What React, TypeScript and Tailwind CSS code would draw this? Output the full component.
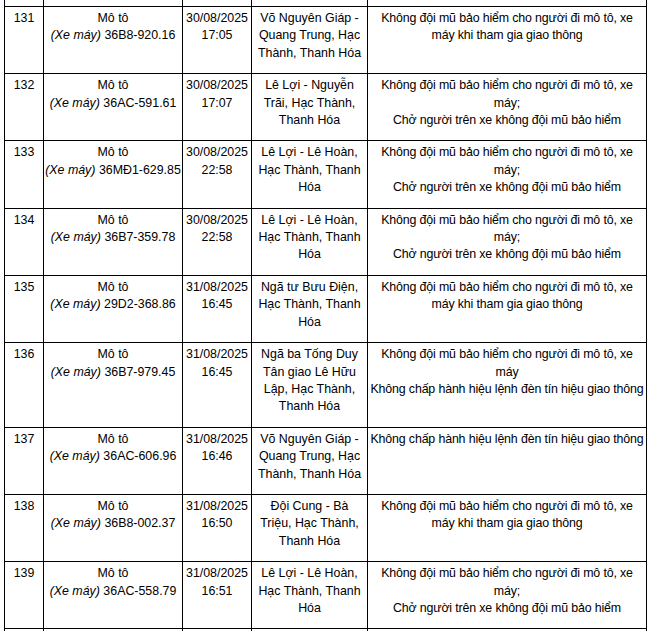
import React from "react";

type Row = {
  no: string;
  plate: string;
  date: string;
  time: string;
  place: string[];
  viol: string[];
};

const V1 = ["Không đội mũ bảo hiểm cho người đi mô tô, xe", "máy khi tham gia giao thông"];
const V2 = ["Không đội mũ bảo hiểm cho người đi mô tô, xe", "máy;", "Chở người trên xe không đội mũ bảo hiểm"];
const V3 = ["Không đội mũ bảo hiểm cho người đi mô tô, xe", "máy", "Không chấp hành hiệu lệnh đèn tín hiệu giao thông"];

const rows: Row[] = [
  { no: "131", plate: "36B8-920.16", date: "30/08/2025", time: "17:05", place: ["Võ Nguyên Giáp -", "Quang Trung, Hạc", "Thành, Thanh Hóa"], viol: V1 },
  { no: "132", plate: "36AC-591.61", date: "30/08/2025", time: "17:07", place: ["Lê Lợi - Nguyễn", "Trãi, Hạc Thành,", "Thanh Hóa"], viol: V2 },
  { no: "133", plate: "36MĐ1-629.85", date: "30/08/2025", time: "22:58", place: ["Lê Lợi - Lê Hoàn,", "Hạc Thành, Thanh", "Hóa"], viol: V2 },
  { no: "134", plate: "36B7-359.78", date: "30/08/2025", time: "22:58", place: ["Lê Lợi - Lê Hoàn,", "Hạc Thành, Thanh", "Hóa"], viol: V2 },
  { no: "135", plate: "29D2-368.86", date: "31/08/2025", time: "16:45", place: ["Ngã tư Bưu Điện,", "Hạc Thành, Thanh", "Hóa"], viol: V1 },
  { no: "136", plate: "36B7-979.45", date: "31/08/2025", time: "16:45", place: ["Ngã ba Tống Duy", "Tân giao Lê Hữu", "Lập, Hạc Thành,", "Thanh Hóa"], viol: V3 },
  { no: "137", plate: "36AC-606.96", date: "31/08/2025", time: "16:46", place: ["Võ Nguyên Giáp -", "Quang Trung, Hạc", "Thành, Thanh Hóa"], viol: ["Không chấp hành hiệu lệnh đèn tín hiệu giao thông"] },
  { no: "138", plate: "36B8-002.37", date: "31/08/2025", time: "16:50", place: ["Đội Cung - Bà", "Triệu, Hạc Thành,", "Thanh Hóa"], viol: V1 },
  { no: "139", plate: "36AC-558.79", date: "31/08/2025", time: "16:51", place: ["Lê Lợi - Lê Hoàn,", "Hạc Thành, Thanh", "Hóa"], viol: V2 },
];

const cell = "bg-white flex flex-col items-center text-center whitespace-nowrap pt-[3px] pb-[11px] min-h-[52px]";

function Lines({ items }: { items: string[] }) {
  return (
    <>
      {items.map((t, i) => (
        <div key={i}>{t}</div>
      ))}
    </>
  );
}

export default function App() {
  return (
    <div className="w-[651px] h-[631px] overflow-hidden bg-white">
      <div
        className="ml-[4px] w-[643px] grid grid-cols-[38px_138px_68px_115px_278px] gap-px bg-black px-px text-black text-[12.4px] leading-[17.4px]"
        style={{ fontFamily: '"Liberation Sans", Arial, sans-serif' }}
      >
        {/* partial row above */}
        {[0, 1, 2, 3, 4].map((i) => (
          <div key={"t" + i} className="bg-white h-[6px]" />
        ))}
        {rows.map((r) => (
          <React.Fragment key={r.no}>
            <div className={cell}>{r.no}</div>
            <div className={cell}>
              <div>Mô tô</div>
              <div>
                <i>(Xe máy)</i> {r.plate}
              </div>
            </div>
            <div className={cell}>
              <div>{r.date}</div>
              <div>{r.time}</div>
            </div>
            <div className={cell}>
              <Lines items={r.place} />
            </div>
            <div className={cell + " tracking-[-0.15px]"}>
              <Lines items={r.viol} />
            </div>
          </React.Fragment>
        ))}
        {[0, 1, 2, 3, 4].map((i) => (
          <div key={"b" + i} className="bg-white h-[20px]" />
        ))}
      </div>
    </div>
  );
}
